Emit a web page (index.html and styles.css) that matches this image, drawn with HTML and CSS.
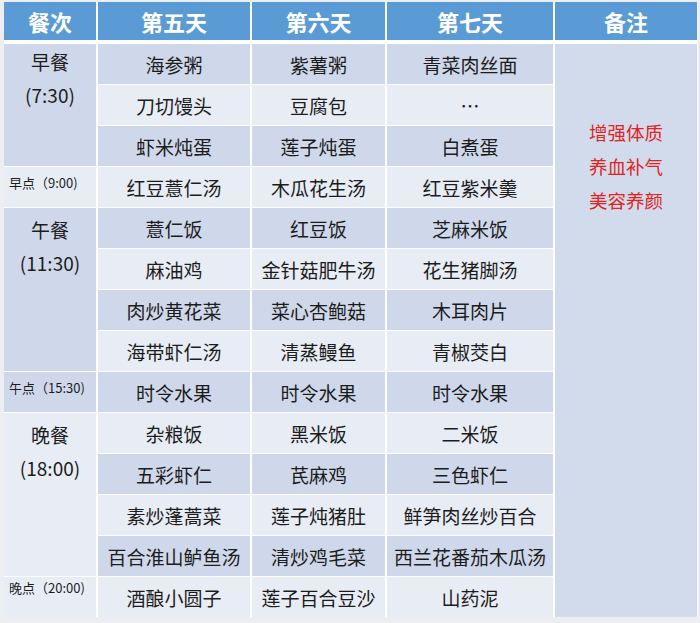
FILE: index.html
```html
<!DOCTYPE html>
<html lang="zh-CN">
<head>
<meta charset="utf-8">
<link rel="stylesheet" href="styles.css">
</head>
<body>
<div class="frame">
  <div class="menu">
    <div class="head">餐次</div>
    <div class="head">第五天</div>
    <div class="head">第六天</div>
    <div class="head">第七天</div>
    <div class="head">备注</div>

    <div class="meal dark span3 first"><span>早餐</span><span>(7:30)</span></div>
    <div class="c dark">海参粥</div><div class="c dark">紫薯粥</div><div class="c dark">青菜肉丝面</div>
    <div class="note"><span>增强体质</span><span>养血补气</span><span>美容养颜</span></div>
    <div class="c light">刀切馒头</div><div class="c light">豆腐包</div><div class="c light">…</div>
    <div class="c dark">虾米炖蛋</div><div class="c dark">莲子炖蛋</div><div class="c dark">白煮蛋</div>

    <div class="snack light">早点（9:00)</div>
    <div class="c light">红豆薏仁汤</div><div class="c light">木瓜花生汤</div><div class="c light">红豆紫米羹</div>

    <div class="meal dark span4"><span>午餐</span><span>(11:30)</span></div>
    <div class="c dark">薏仁饭</div><div class="c dark">红豆饭</div><div class="c dark">芝麻米饭</div>
    <div class="c light">麻油鸡</div><div class="c light">金针菇肥牛汤</div><div class="c light">花生猪脚汤</div>
    <div class="c dark">肉炒黄花菜</div><div class="c dark">菜心杏鲍菇</div><div class="c dark">木耳肉片</div>
    <div class="c light">海带虾仁汤</div><div class="c light">清蒸鳗鱼</div><div class="c light">青椒茭白</div>

    <div class="snack dark">午点（15:30)</div>
    <div class="c dark">时令水果</div><div class="c dark">时令水果</div><div class="c dark">时令水果</div>

    <div class="meal light span4"><span>晚餐</span><span>(18:00)</span></div>
    <div class="c light">杂粮饭</div><div class="c light">黑米饭</div><div class="c light">二米饭</div>
    <div class="c dark">五彩虾仁</div><div class="c dark">芪麻鸡</div><div class="c dark">三色虾仁</div>
    <div class="c light">素炒蓬蒿菜</div><div class="c light">莲子炖猪肚</div><div class="c light">鲜笋肉丝炒百合</div>
    <div class="c dark">百合淮山鲈鱼汤</div><div class="c dark">清炒鸡毛菜</div><div class="c dark">西兰花番茄木瓜汤</div>

    <div class="snack light last">晚点（20:00)</div>
    <div class="c light">酒酿小圆子</div><div class="c light">莲子百合豆沙</div><div class="c light">山药泥</div>
  </div>
</div>
</body>
</html>
```

FILE: styles.css
```css
html, body {
  margin: 0;
  padding: 0;
}
body {
  background: #eceef2;
  font-family: "Microsoft YaHei", "Noto Sans CJK SC", "Noto Sans", sans-serif;
  color: #1c1c1c;
}
.frame {
  padding: 2px 2px 7px 4px;
}
.menu {
  display: grid;
  width: 693px;
  grid-template-columns: 92px 152px 133px 166px 142px;
  grid-template-rows: 41px repeat(14, 40px);
  column-gap: 2px;
  row-gap: 1px;
  background: #ffffff;
  border-right: 1px solid #f6f7f9;
}
.head {
  background: #5b9bd5;
  color: #ffffff;
  font-weight: bold;
  font-size: 22px;
  display: flex;
  align-items: center;
  justify-content: center;
  margin-bottom: 3px;
  padding-bottom: 1px;
}
.dark { background: #cfd8ea; }
.light { background: #e8ecf4; }
.c {
  display: flex;
  align-items: center;
  justify-content: center;
  font-size: 19px;
  white-space: nowrap;
}
.meal {
  grid-column: 1;
  display: flex;
  flex-direction: column;
  align-items: center;
  padding-top: 5px;
  font-size: 19px;
  line-height: 33px;
}
.meal.first { padding-top: 1px; }
.span3 { grid-row: span 3; }
.span4 { grid-row: span 4; }
.snack {
  grid-column: 1;
  font-size: 13px;
  line-height: 16px;
  padding: 8px 0 0 5px;
  white-space: nowrap;
}
.snack.last { padding-top: 3px; }
.note {
  grid-column: 5;
  grid-row: 2 / span 14;
  background: #d1dbec;
  display: flex;
  flex-direction: column;
  align-items: center;
  padding-top: 71px;
  color: #e0231f;
  font-size: 18.5px;
  line-height: 34px;
}
```
